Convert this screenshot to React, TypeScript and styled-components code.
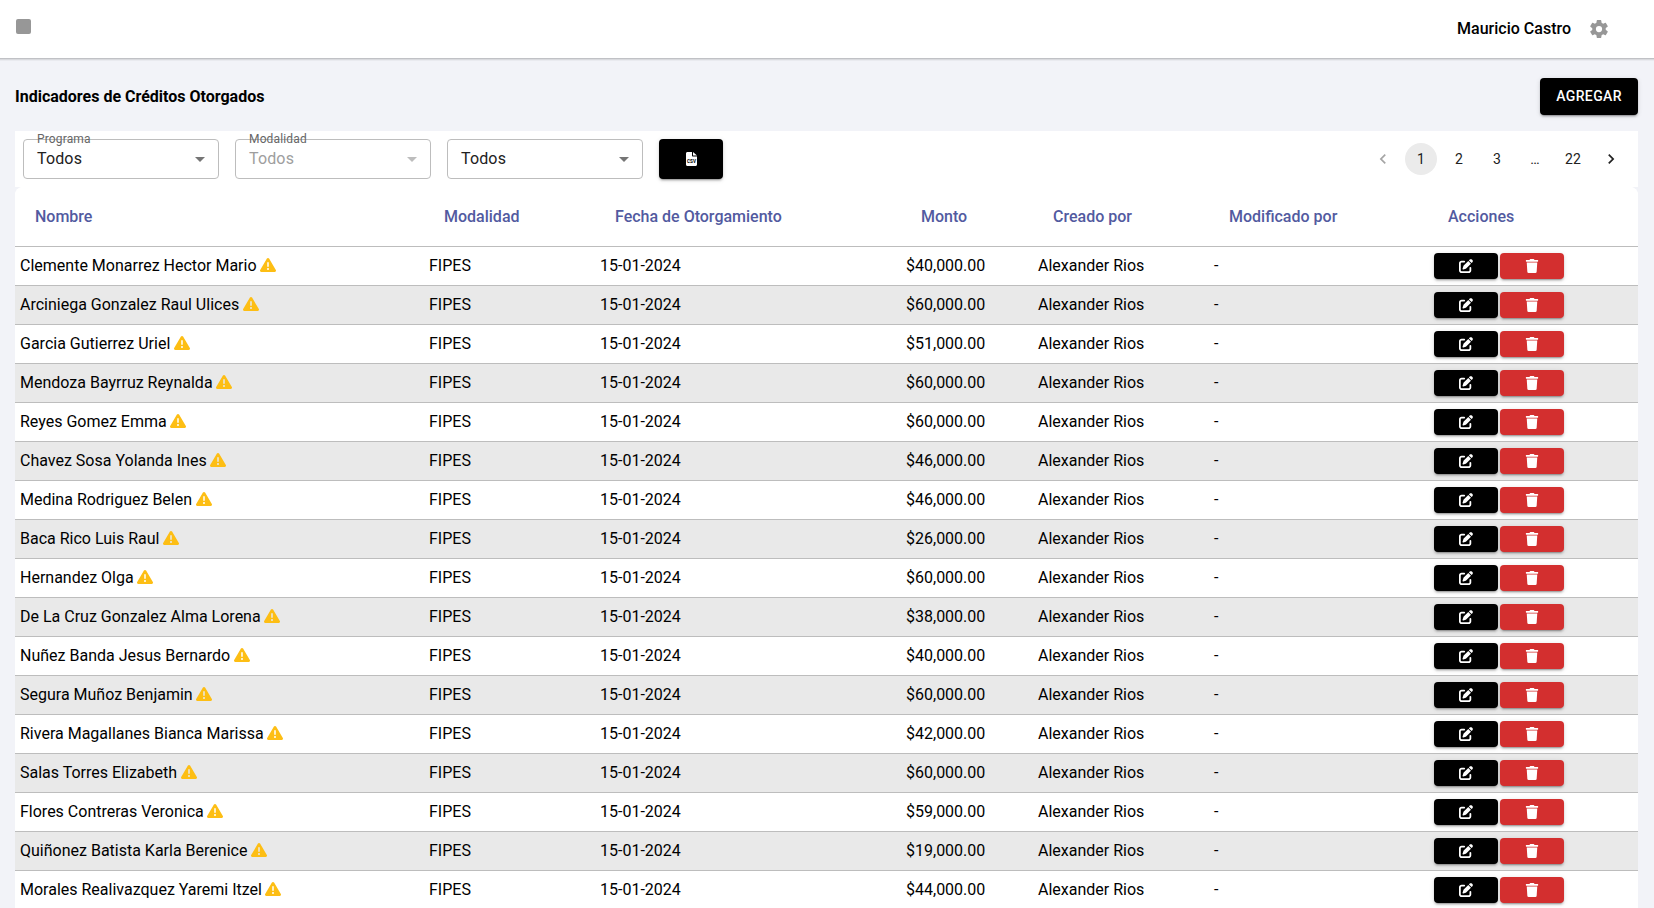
import React from "react";
import styled, { createGlobalStyle } from "styled-components";
import { FaTrash } from "react-icons/fa";
import { FaPenToSquare, FaTriangleExclamation } from "react-icons/fa6";
import { IoSettingsSharp } from "react-icons/io5";
import { MdArrowDropDown, MdNavigateBefore, MdNavigateNext } from "react-icons/md";

const GlobalStyle = createGlobalStyle`
  * { box-sizing: border-box; }
  body {
    margin: 0;
    background: #f2f3f8;
    color: #000;
    font-family: Roboto, "Liberation Sans", sans-serif;
    font-size: 16px;
  }
`;

const Page = styled.div`
  height: 908px;
  overflow: hidden;
`;

const TopBar = styled.header`
  display: flex;
  align-items: center;
  justify-content: space-between;
  height: 58px;
  padding: 0 45px 0 16px;
  background: #fff;
  box-shadow: 0 1px 0 #c0c1c5, 0 2px 0 #d9dade, 0 3px 0 #e9eaef;
`;

const MenuSquare = styled.div`
  width: 15px;
  height: 15px;
  margin-bottom: 5px;
  border-radius: 2px;
  background: #979797;
`;

const User = styled.div`
  display: flex;
  align-items: center;
  gap: 18px;
  font-weight: 500;
  line-height: 20px;

  svg {
    display: block;
    color: #979797;
  }
`;

const Main = styled.main`
  padding: 20px 16px 0 15px;
`;

const TitleRow = styled.div`
  display: flex;
  align-items: flex-start;
  justify-content: space-between;
  height: 53px;
`;

const Title = styled.h1`
  margin: 9px 0 0;
  font-size: 16px;
  line-height: 20px;
  font-weight: 700;
`;

const Button = styled.button<{ $tone?: string; $height: number }>`
  display: flex;
  align-items: center;
  justify-content: center;
  min-width: 64px;
  height: ${(p) => p.$height}px;
  padding: 0 16px;
  border: 0;
  border-radius: 4px;
  background: ${(p) => p.$tone ?? "#000"};
  color: #fff;
  font: 500 14px/24.5px Roboto, "Liberation Sans", sans-serif;
  letter-spacing: 0.4px;
  box-shadow: 0 3px 1px -2px rgba(0, 0, 0, 0.2), 0 2px 2px rgba(0, 0, 0, 0.14),
    0 1px 5px rgba(0, 0, 0, 0.12);
`;

const Toolbar = styled.div`
  display: flex;
  align-items: center;
  justify-content: space-between;
  height: 56px;
  padding: 0 8px;
  background: #fff;
`;

const Filters = styled.div`
  display: flex;
  gap: 16px;
`;

const SelectBox = styled.div<{ $disabled?: boolean }>`
  position: relative;
  display: flex;
  align-items: center;
  justify-content: space-between;
  width: 196px;
  height: 40px;
  padding: 0 6px 2px 13px;
  border: 1px solid #bdbdbd;
  border-radius: 4px;
  color: ${(p) => (p.$disabled ? "#9e9e9e" : "#212121")};
  letter-spacing: 0.15px;

  svg {
    position: relative;
    top: 1px;
    color: ${(p) => (p.$disabled ? "#bdbdbd" : "#757575")};
  }
`;

const FloatingLabel = styled.span`
  position: absolute;
  left: 13px;
  top: -9px;
  font-size: 12px;
  line-height: 16px;
  letter-spacing: 0.15px;
  color: #666;
`;

const Pager = styled.nav`
  display: flex;
  gap: 6px;
  padding-right: 3px;
`;

const PageItem = styled.span<{ $active?: boolean; $faded?: boolean }>`
  display: flex;
  align-items: center;
  justify-content: center;
  width: 32px;
  height: 32px;
  border-radius: 16px;
  background: ${(p) => (p.$active ? "#ebebeb" : "transparent")};
  color: ${(p) => (p.$faded ? "#a5a5a5" : "#212121")};
  font-size: 14px;
  line-height: 20px;
  letter-spacing: 0.15px;
`;

const Sheet = styled.section`
  background: #fff;
  border-radius: 8px 8px 0 0;
`;

const Row = styled.div<{ $striped?: boolean }>`
  display: grid;
  grid-template-columns: 409px 171px 306px 132px 176px 220px 1fr;
  align-items: center;
  height: 39px;
  padding-left: 5px;
  border-bottom: 1px solid #bdbdbd;
  background: ${(p) => (p.$striped ? "#e9e9e9" : "#fff")};
`;

const HeadRow = styled(Row)`
  grid-template-columns: 409px 171px 306px 132px 176px 219px 1fr;
  height: 60px;
  padding: 0 0 0 20px;
  border-radius: 8px 8px 0 0;
  color: #525aa0;
  font-weight: 500;
`;

const Cell = styled.div`
  line-height: 20px;
  white-space: nowrap;
`;

const NameCell = styled(Cell)`
  svg {
    margin-left: -0.5px;
    vertical-align: -2px;
    color: #fdbe14;
  }
`;

const Actions = styled.div`
  display: flex;
  gap: 2px;
`;

const CsvGlyph = styled.svg`
  overflow: visible;

  text {
    fill: #000;
    font: 700 6px/1 Roboto, "Liberation Sans", sans-serif;
    letter-spacing: 0;
  }
`;

const headings = [
  "Nombre",
  "Modalidad",
  "Fecha de Otorgamiento",
  "Monto",
  "Creado por",
  "Modificado por",
  "Acciones",
];

const credits: [string, string][] = [
  ["Clemente Monarrez Hector Mario", "$40,000.00"],
  ["Arciniega Gonzalez Raul Ulices", "$60,000.00"],
  ["Garcia Gutierrez Uriel", "$51,000.00"],
  ["Mendoza Bayrruz Reynalda", "$60,000.00"],
  ["Reyes Gomez Emma", "$60,000.00"],
  ["Chavez Sosa Yolanda Ines", "$46,000.00"],
  ["Medina Rodriguez Belen", "$46,000.00"],
  ["Baca Rico Luis Raul", "$26,000.00"],
  ["Hernandez Olga", "$60,000.00"],
  ["De La Cruz Gonzalez Alma Lorena", "$38,000.00"],
  ["Nuñez Banda Jesus Bernardo", "$40,000.00"],
  ["Segura Muñoz Benjamin", "$60,000.00"],
  ["Rivera Magallanes Bianca Marissa", "$42,000.00"],
  ["Salas Torres Elizabeth", "$60,000.00"],
  ["Flores Contreras Veronica", "$59,000.00"],
  ["Quiñonez Batista Karla Berenice", "$19,000.00"],
  ["Morales Realivazquez Yaremi Itzel", "$44,000.00"],
];

function CsvIcon() {
  return (
    <CsvGlyph width="11" height="14" viewBox="0 0 11 14" fill="currentColor">
      <path d="M1.500 0H6v3.500c0 .6.4 1 1 1h4v8c0 .9-.6 1.500-1.500 1.500h-8C.6 14 0 13.400 0 12.500v-11C0 .6.6 0 1.500 0z" />
      <path d="M7 0l4 3.500H7z" />
      <text x="1" y="10.5" textLength="9" lengthAdjust="spacingAndGlyphs">
        CSV
      </text>
    </CsvGlyph>
  );
}

function Select({ label, disabled }: { label?: string; disabled?: boolean }) {
  return (
    <SelectBox $disabled={disabled}>
      {label && <FloatingLabel>{label}</FloatingLabel>}
      Todos
      <MdArrowDropDown size={24} />
    </SelectBox>
  );
}

export default function App() {
  return (
    <Page>
      <GlobalStyle />
      <TopBar>
        <MenuSquare />
        <User>
          Mauricio Castro
          <IoSettingsSharp size={20} />
        </User>
      </TopBar>
      <Main>
        <TitleRow>
          <Title>Indicadores de Créditos Otorgados</Title>
          <Button $height={37}>AGREGAR</Button>
        </TitleRow>
        <Toolbar>
          <Filters>
            <Select label="Programa" />
            <Select label="Modalidad" disabled />
            <Select />
            <Button $height={40} aria-label="Exportar CSV">
              <CsvIcon />
            </Button>
          </Filters>
          <Pager>
            <PageItem $faded><MdNavigateBefore size={20} /></PageItem>
            <PageItem $active>1</PageItem>
            <PageItem>2</PageItem>
            <PageItem>3</PageItem>
            <PageItem>…</PageItem>
            <PageItem>22</PageItem>
            <PageItem><MdNavigateNext size={20} /></PageItem>
          </Pager>
        </Toolbar>
        <Sheet>
          <HeadRow>
            {headings.map((h) => (
              <Cell key={h}>{h}</Cell>
            ))}
          </HeadRow>
          {credits.map(([name, amount], i) => (
            <Row key={name} $striped={i % 2 === 1}>
              <NameCell>
                {name}{" "}
                <FaTriangleExclamation size={16} />
              </NameCell>
              <Cell>FIPES</Cell>
              <Cell>15-01-2024</Cell>
              <Cell>{amount}</Cell>
              <Cell>Alexander Rios</Cell>
              <Cell>-</Cell>
              <Actions>
                <Button $height={26} aria-label="Editar">
                  <FaPenToSquare size={14} />
                </Button>
                <Button $height={26} $tone="#d32f2f" aria-label="Eliminar">
                  <FaTrash size={14} />
                </Button>
              </Actions>
            </Row>
          ))}
        </Sheet>
      </Main>
    </Page>
  );
}
